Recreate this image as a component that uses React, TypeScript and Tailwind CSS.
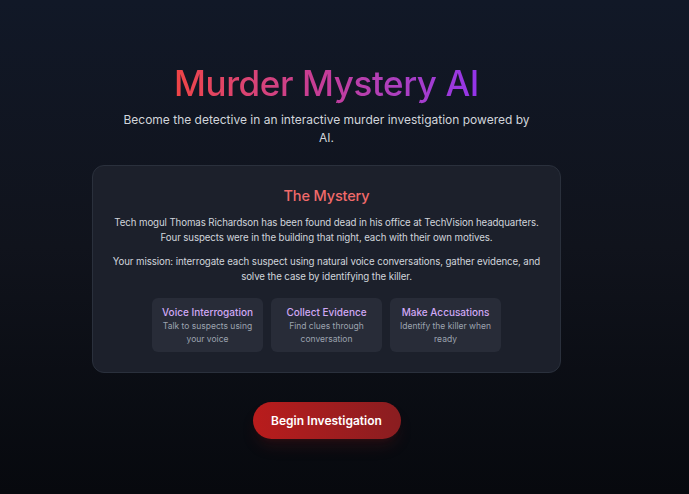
import React from 'react';

const features = [
  { title: 'Voice Interrogation', text: 'Talk to suspects using your voice' },
  { title: 'Collect Evidence', text: 'Find clues through conversation' },
  { title: 'Make Accusations', text: 'Identify the killer when ready' },
];

export default function App() {
  return (
    <div className="min-h-screen w-full bg-gradient-to-b from-[#111827] via-[#10131c] to-[#07090e] font-['Inter',sans-serif] flex flex-col items-center pt-[62px] pr-[36px]">
      <h1 className="text-[35px] leading-[42px] font-medium tracking-[-0.012em] bg-gradient-to-r from-[#ef4444] via-[#c43c9a] to-[#9333ea] bg-clip-text text-transparent">
        Murder Mystery AI
      </h1>
      <p className="mt-[7px] w-[412px] text-center text-[12px] leading-[18px] text-[#d1d5db]">
        Become the detective in an interactive murder investigation powered by AI.
      </p>

      <div className="mt-[18px] w-[469px] rounded-xl border border-[#2a303c] bg-[#1c202b] px-[17px] pt-[20px] pb-[20px] text-center">
        <h2 className="text-[14.5px] leading-[20px] font-medium tracking-[-0.01em] text-[#f06a6a]">The Mystery</h2>
        <p className="mt-[9px] text-[9.7px] leading-[15px] tracking-[-0.01em] text-[#d1d5db]">
          Tech mogul Thomas Richardson has been found dead in his office at TechVision headquarters. Four suspects were in the building that night, each with their own motives.
        </p>
        <p className="mt-[9px] text-[9.7px] leading-[15px] tracking-[-0.01em] text-[#d1d5db]">
          Your mission: interrogate each suspect using natural voice conversations, gather evidence, and solve the case by identifying the killer.
        </p>
        <div className="mx-auto mt-[14px] grid w-[349px] grid-cols-3 gap-2">
          {features.map((f) => (
            <div key={f.title} className="rounded-md bg-[#282c38] px-1.5 pt-[8px] h-[54px]">
              <div className="text-[10px] leading-[13px] font-medium text-[#d0a8f5]">{f.title}</div>
              <div className="mt-[1px] text-[8.5px] leading-[12.5px] text-[#9ca3af]">{f.text}</div>
            </div>
          ))}
        </div>
      </div>

      <button className="mt-[29px] h-[37px] w-[148px] rounded-full bg-gradient-to-r from-[#b91c1c] to-[#8a1d20] text-[12px] font-semibold text-white shadow-lg shadow-red-900/20">
        Begin Investigation
      </button>
    </div>
  );
}
